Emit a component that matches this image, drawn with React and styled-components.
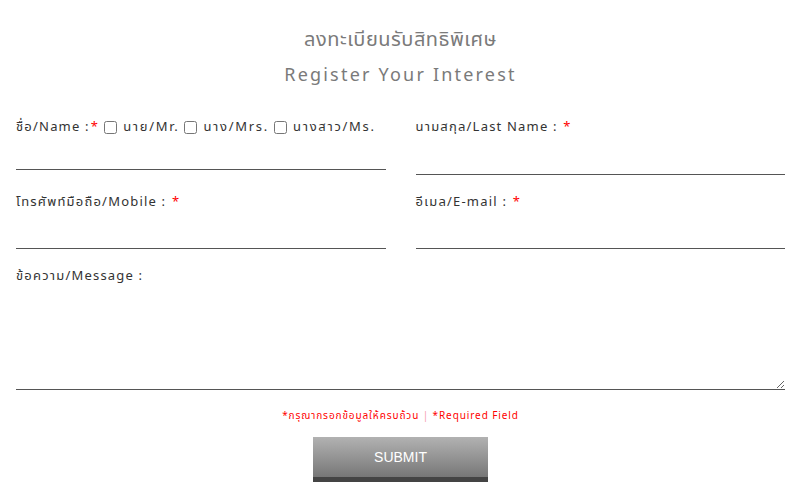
import React from "react"
import styled, { createGlobalStyle } from "styled-components"

const GlobalStyle = createGlobalStyle`
    body {
        margin: 0;
        background: #fff;
        font-family: "Noto Sans Thai", "Noto Sans", "DejaVu Sans", sans-serif;
    }
`

export default function App() {
    return (
        <>
            <GlobalStyle />
            <PageContainer>
                <Title>ลงทะเบียนรับสิทธิพิเศษ</Title>
                <SubTitle>Register Your Interest</SubTitle>

                <FormGrid>
                    <Field>
                        <Label>
                            ชื่อ/Name :<Star>*</Star>
                            <Check type="checkbox" /><Option>นาย/Mr.</Option>
                            <Check type="checkbox" /><Option>นาง/Mrs.</Option>
                            <Check type="checkbox" /><Option>นางสาว/Ms.</Option>
                        </Label>
                        <Input type="text" $h={34} />
                    </Field>
                    <Field>
                        <Label>นามสกุล/Last Name :&nbsp;<Star>*</Star></Label>
                        <Input type="text" $h={39} />
                    </Field>
                    <Field>
                        <Label>โทรศัพท์มือถือ/Mobile :&nbsp;<Star>*</Star></Label>
                        <Input type="text" />
                    </Field>
                    <Field>
                        <Label>อีเมล/E-mail :&nbsp;<Star>*</Star></Label>
                        <Input type="text" />
                    </Field>
                    <Field $wide>
                        <Label>ข้อความ/Message :</Label>
                        <TextArea />
                    </Field>
                </FormGrid>

                <Note>*กรุณากรอกข้อมูลให้ครบถ้วน <Pipe>|</Pipe> *Required Field</Note>
                <SubmitButton type="button">SUBMIT</SubmitButton>
            </PageContainer>
        </>
    )
}

const PageContainer = styled.div`
    display: flex;
    flex-direction: column;
    align-items: center;
    padding: 26px 14px 20px 16px;
`
const Title = styled.h1`
    margin: 0;
    font-size: 20px;
    font-weight: 400;
    line-height: 28px;
    color: #7a7a7a;
    letter-spacing: 0.5px;
`
const SubTitle = styled.h2`
    margin: 10px 0 0;
    font-size: 18px;
    font-weight: 400;
    line-height: 24px;
    color: #7a7a7a;
    letter-spacing: 2.2px;
`
const FormGrid = styled.div`
    align-self: stretch;
    display: grid;
    grid-template-columns: 1fr 1fr;
    column-gap: 30px;
    row-gap: 18px;
    margin-top: 30px;
`
const Field = styled.div`
    display: flex;
    flex-direction: column;
    grid-column: ${p => p.$wide ? "1 / -1" : "auto"};
`
const Label = styled.label`
    display: flex;
    align-items: center;
    height: 18px;
    font-size: 13px;
    color: #333;
    letter-spacing: 1.2px;
    white-space: nowrap;
`
const Option = styled.span`
    letter-spacing: 1.7px;
`
const Star = styled.span`
    color: #f00;
    margin-left: 1px;
`
const Check = styled.input`
    width: 13px;
    height: 13px;
    margin: 0 6px 0 5px;
`
const Input = styled.input`
    box-sizing: border-box;
    width: 100%;
    height: ${p => p.$h || 38}px;
    border: none;
    border-bottom: 1px solid #555;
    outline: none;
    background: transparent;
`
const TextArea = styled.textarea`
    box-sizing: border-box;
    width: 100%;
    height: 105px;
    border: none;
    border-bottom: 1px solid #555;
    outline: none;
    resize: vertical;
    background: transparent;
`
const Note = styled.p`
    margin: 20px 0 0;
    font-size: 10px;
    line-height: 12px;
    color: #f00;
    letter-spacing: 0.9px;
`
const Pipe = styled.span`
    color: #f599b0;
`
const SubmitButton = styled.button`
    margin-top: 15px;
    width: 175px;
    height: 45px;
    border: none;
    border-bottom: 5px solid #444;
    background: linear-gradient(#b2b2b2, #777);
    color: #fff;
    font-family: "Liberation Sans", Arial, sans-serif;
    font-size: 14px;
    padding: 0;
    cursor: pointer;
`
